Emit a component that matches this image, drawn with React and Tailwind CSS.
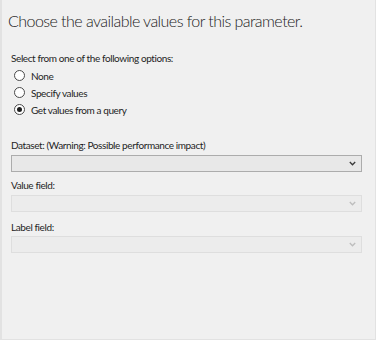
import { useState } from "react";

const Chevron = ({ disabled }) => (
  <svg width="7" height="5" viewBox="0 0 7 5" className="shrink-0">
    <path d="M0.8 1 L3.5 3.8 L6.2 1" fill="none" stroke={disabled ? "#bdbdbd" : "#3a3a3a"} strokeWidth="1.3" />
  </svg>
);

function Select({ disabled }) {
  return (
    <div
      className={`flex h-[17px] items-center justify-end pr-[5px] border ${
        disabled ? "border-[#dedede] bg-[#ececec]" : "border-[#acacac] bg-[#e8e8e8]"
      }`}
    >
      <Chevron disabled={disabled} />
    </div>
  );
}

function Radio({ label, checked, onClick }) {
  return (
    <div className="flex items-center h-[17px] cursor-default" onClick={onClick}>
      <span className="ml-[3px] w-[11px] h-[11px] rounded-full border border-[#4a4a4a] bg-white flex items-center justify-center">
        {checked && <span className="w-[5px] h-[5px] rounded-full bg-[#1e1e1e]" />}
      </span>
      <span className="ml-[6px]">{label}</span>
    </div>
  );
}

export default function App() {
  const [mode, setMode] = useState("query");

  return (
    <div className="w-[378px] h-[344px] bg-white">
      <div
        className="w-[376px] h-[340px] bg-[#f0f0f0] border-l-[2px] border-r border-b border-[#e2e2e2] text-[#1e1e1e]"
        style={{ fontFamily: 'Lato, "Open Sans", sans-serif' }}
      >
        <h1 className="pt-[10px] pl-[6px] text-[16px] font-light leading-[22px] tracking-[-0.55px] text-[#1a1a1a]">
          Choose the available values for this parameter.
        </h1>

        <div className="pl-[9px] pr-[13px] text-[10px] leading-[14px] tracking-[-0.4px]">
          <p className="mt-[19px]">Select from one of the following options:</p>
          <div className="mt-[2px]">
            <Radio label="None" checked={mode === "none"} onClick={() => setMode("none")} />
            <Radio label="Specify values" checked={mode === "spec"} onClick={() => setMode("spec")} />
            <Radio label="Get values from a query" checked={mode === "query"} onClick={() => setMode("query")} />
          </div>

          <p className="mt-[20px]">Dataset: (Warning: Possible performance impact)</p>
          <div className="mt-[3px]">
            <Select />
          </div>

          <p className="mt-[6px]">Value field:</p>
          <div className="mt-[3px]">
            <Select disabled />
          </div>

          <p className="mt-[8px]">Label field:</p>
          <div className="mt-[2px]">
            <Select disabled />
          </div>
        </div>
      </div>
    </div>
  );
}
